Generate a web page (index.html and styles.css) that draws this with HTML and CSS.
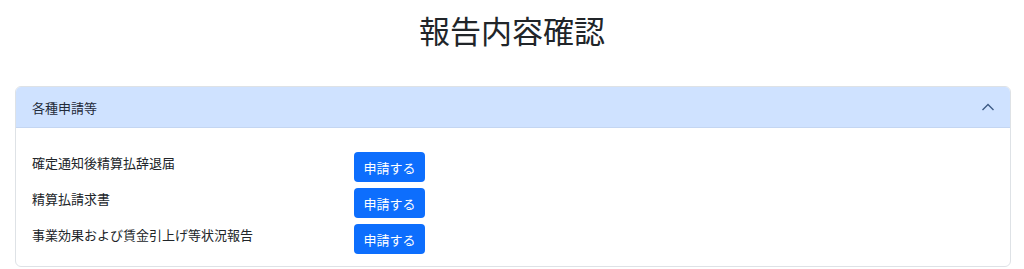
FILE: index.html
```html
<!DOCTYPE html>
<html lang="ja">
<head>
    <meta charset="UTF-8">
    <meta name="viewport" content="width=device-width, initial-scale=1.0">
    <title>報告内容確認</title>
    <link rel="stylesheet" href="styles.css">
</head>
<body>
    <h1 class="page-title">報告内容確認</h1>

    <div class="container">
        <!-- 各種申請等 -->
        <div class="accordion-item">
            <div class="accordion-header">
                <span>各種申請等</span>
                <svg class="chevron" width="16" height="16" viewBox="0 0 16 16">
                    <path d="M2.5 11 L8 5.5 L13.5 11" fill="none" stroke="#3d5a85" stroke-width="1.4"/>
                </svg>
            </div>
            <div class="accordion-body">
                <div class="request-row">
                    <div class="request-label">確定通知後精算払辞退届</div>
                    <div><button class="btn-apply">申請する</button></div>
                </div>
                <div class="request-row">
                    <div class="request-label">精算払請求書</div>
                    <div><button class="btn-apply">申請する</button></div>
                </div>
                <div class="request-row">
                    <div class="request-label">事業効果および賃金引上げ等状況報告</div>
                    <div><button class="btn-apply">申請する</button></div>
                </div>
            </div>
        </div>
    </div>
</body>
</html>
```

FILE: styles.css
```css
body {
    margin: 0;
    font-family: "Noto Sans CJK JP", "Noto Sans", sans-serif;
    color: #212529;
    background-color: #ffffff;
}

.page-title {
    margin: 11px 0 0;
    text-align: center;
    font-size: 31px;
    font-weight: 400;
    line-height: 38px;
}

/* Contenedor principal */
.container {
    padding: 0 13px 0 15px;
    margin-top: 37px;
}

.accordion-item {
    border: 1px solid #dee2e6;
    border-radius: 6px;
    overflow: hidden;
}

.accordion-header {
    display: flex;
    align-items: center;
    justify-content: space-between;
    height: 40px;
    padding: 0 16px;
    background-color: #cfe2ff;
    border-bottom: 1px solid #c4d6f2;
    color: #1f2a3a;
    font-size: 13px;
}

.chevron {
    margin-right: -2px;
}

.accordion-body {
    padding: 24px 16px 12px;
}

.request-row {
    display: grid;
    grid-template-columns: 322px auto;
    margin-bottom: 6px;
}

.request-row:last-child {
    margin-bottom: 0;
}

.request-label {
    font-size: 13px;
    line-height: 21px;
}

.btn-apply {
    height: 30px;
    width: 71px;
    padding: 0;
    background-color: #0d6efd;
    color: #ffffff;
    border: none;
    border-radius: 4px;
    font-family: inherit;
    font-size: 13px;
    cursor: pointer;
}
```
